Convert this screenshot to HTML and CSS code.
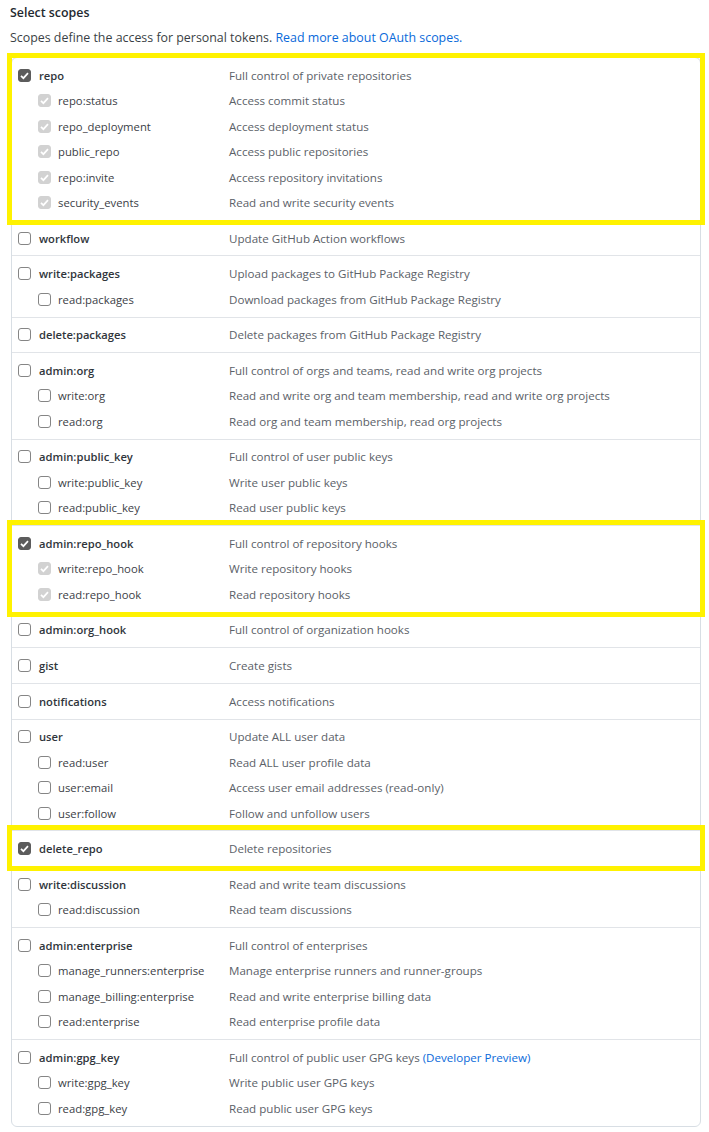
FILE: index.html
```html
<!DOCTYPE html>
<html lang="en">
<head>
<meta charset="utf-8">
<title>Select scopes</title>
<link rel="stylesheet" href="styles.css">
</head>
<body>
<h3 class="title">Select scopes</h3>
<p class="intro">Scopes define the access for personal tokens. <a class="link" href="#">Read more about OAuth scopes.</a></p>

<div class="scopes">
  <div class="group hl">
    <div class="row"><div class="name"><span class="cb on"><svg viewBox="0 0 13 13"><path d="M3 6.8 5.4 9.2 10 4.2"/></svg></span><b>repo</b></div><div class="desc">Full control of private repositories</div></div>
    <div class="row child"><div class="name"><span class="cb dis"><svg viewBox="0 0 13 13"><path d="M3 6.8 5.4 9.2 10 4.2"/></svg></span>repo:status</div><div class="desc">Access commit status</div></div>
    <div class="row child"><div class="name"><span class="cb dis"><svg viewBox="0 0 13 13"><path d="M3 6.8 5.4 9.2 10 4.2"/></svg></span>repo_deployment</div><div class="desc">Access deployment status</div></div>
    <div class="row child"><div class="name"><span class="cb dis"><svg viewBox="0 0 13 13"><path d="M3 6.8 5.4 9.2 10 4.2"/></svg></span>public_repo</div><div class="desc">Access public repositories</div></div>
    <div class="row child"><div class="name"><span class="cb dis"><svg viewBox="0 0 13 13"><path d="M3 6.8 5.4 9.2 10 4.2"/></svg></span>repo:invite</div><div class="desc">Access repository invitations</div></div>
    <div class="row child"><div class="name"><span class="cb dis"><svg viewBox="0 0 13 13"><path d="M3 6.8 5.4 9.2 10 4.2"/></svg></span>security_events</div><div class="desc">Read and write security events</div></div>
  </div>

  <div class="group">
    <div class="row"><div class="name"><span class="cb"></span><b>workflow</b></div><div class="desc">Update GitHub Action workflows</div></div>
  </div>

  <div class="group">
    <div class="row"><div class="name"><span class="cb"></span><b>write:packages</b></div><div class="desc">Upload packages to GitHub Package Registry</div></div>
    <div class="row child"><div class="name"><span class="cb"></span>read:packages</div><div class="desc">Download packages from GitHub Package Registry</div></div>
  </div>

  <div class="group">
    <div class="row"><div class="name"><span class="cb"></span><b>delete:packages</b></div><div class="desc">Delete packages from GitHub Package Registry</div></div>
  </div>

  <div class="group">
    <div class="row"><div class="name"><span class="cb"></span><b>admin:org</b></div><div class="desc">Full control of orgs and teams, read and write org projects</div></div>
    <div class="row child"><div class="name"><span class="cb"></span>write:org</div><div class="desc">Read and write org and team membership, read and write org projects</div></div>
    <div class="row child"><div class="name"><span class="cb"></span>read:org</div><div class="desc">Read org and team membership, read org projects</div></div>
  </div>

  <div class="group">
    <div class="row"><div class="name"><span class="cb"></span><b>admin:public_key</b></div><div class="desc">Full control of user public keys</div></div>
    <div class="row child"><div class="name"><span class="cb"></span>write:public_key</div><div class="desc">Write user public keys</div></div>
    <div class="row child"><div class="name"><span class="cb"></span>read:public_key</div><div class="desc">Read user public keys</div></div>
  </div>

  <div class="group hl">
    <div class="row"><div class="name"><span class="cb on"><svg viewBox="0 0 13 13"><path d="M3 6.8 5.4 9.2 10 4.2"/></svg></span><b>admin:repo_hook</b></div><div class="desc">Full control of repository hooks</div></div>
    <div class="row child"><div class="name"><span class="cb dis"><svg viewBox="0 0 13 13"><path d="M3 6.8 5.4 9.2 10 4.2"/></svg></span>write:repo_hook</div><div class="desc">Write repository hooks</div></div>
    <div class="row child"><div class="name"><span class="cb dis"><svg viewBox="0 0 13 13"><path d="M3 6.8 5.4 9.2 10 4.2"/></svg></span>read:repo_hook</div><div class="desc">Read repository hooks</div></div>
  </div>

  <div class="group">
    <div class="row"><div class="name"><span class="cb"></span><b>admin:org_hook</b></div><div class="desc">Full control of organization hooks</div></div>
  </div>

  <div class="group">
    <div class="row"><div class="name"><span class="cb"></span><b>gist</b></div><div class="desc">Create gists</div></div>
  </div>

  <div class="group">
    <div class="row"><div class="name"><span class="cb"></span><b>notifications</b></div><div class="desc">Access notifications</div></div>
  </div>

  <div class="group">
    <div class="row"><div class="name"><span class="cb"></span><b>user</b></div><div class="desc">Update ALL user data</div></div>
    <div class="row child"><div class="name"><span class="cb"></span>read:user</div><div class="desc">Read ALL user profile data</div></div>
    <div class="row child"><div class="name"><span class="cb"></span>user:email</div><div class="desc">Access user email addresses (read-only)</div></div>
    <div class="row child"><div class="name"><span class="cb"></span>user:follow</div><div class="desc">Follow and unfollow users</div></div>
  </div>

  <div class="group hl">
    <div class="row"><div class="name"><span class="cb on"><svg viewBox="0 0 13 13"><path d="M3 6.8 5.4 9.2 10 4.2"/></svg></span><b>delete_repo</b></div><div class="desc">Delete repositories</div></div>
  </div>

  <div class="group">
    <div class="row"><div class="name"><span class="cb"></span><b>write:discussion</b></div><div class="desc">Read and write team discussions</div></div>
    <div class="row child"><div class="name"><span class="cb"></span>read:discussion</div><div class="desc">Read team discussions</div></div>
  </div>

  <div class="group">
    <div class="row"><div class="name"><span class="cb"></span><b>admin:enterprise</b></div><div class="desc">Full control of enterprises</div></div>
    <div class="row child"><div class="name"><span class="cb"></span>manage_runners:enterprise</div><div class="desc">Manage enterprise runners and runner-groups</div></div>
    <div class="row child"><div class="name"><span class="cb"></span>manage_billing:enterprise</div><div class="desc">Read and write enterprise billing data</div></div>
    <div class="row child"><div class="name"><span class="cb"></span>read:enterprise</div><div class="desc">Read enterprise profile data</div></div>
  </div>

  <div class="group">
    <div class="row"><div class="name"><span class="cb"></span><b>admin:gpg_key</b></div><div class="desc">Full control of public user GPG keys <a class="link" href="#">(Developer Preview)</a></div></div>
    <div class="row child"><div class="name"><span class="cb"></span>write:gpg_key</div><div class="desc">Write public user GPG keys</div></div>
    <div class="row child"><div class="name"><span class="cb"></span>read:gpg_key</div><div class="desc">Read public user GPG keys</div></div>
  </div>
</div>
</body>
</html>
```

FILE: styles.css
```css
html, body {
  background: #ffffff;
}

body {
  margin: 0;
  padding: 0 8px 0 10px;
  font-family: "Open Sans", "Noto Sans", sans-serif;
  color: #24292f;
}

.title {
  margin: 3px 0 0;
  font-size: 12.4px;
  font-weight: 600;
  line-height: 20px;
}

.intro {
  margin: 5px 0 9px;
  font-size: 12.4px;
  line-height: 20px;
  color: #3a3f45;
}

.link {
  color: #0969da;
  text-decoration: none;
}

.scopes {
  margin-left: 1px;
  width: 688px;
  border: 1px solid #d8dee4;
  border-radius: 6px;
}

.group {
  padding: 4.6px 0;
  border-top: 1px solid #e1e4e8;
}

.group:first-child {
  border-top: 0;
}

.group.hl {
  position: relative;
  z-index: 1;
  outline: 5px solid #fff200;
  outline-offset: 0;
}

.row {
  display: flex;
  align-items: center;
  height: 25.45px;
  padding-left: 6px;
  font-size: 11.6px;
}

.name {
  display: flex;
  align-items: center;
  gap: 8px;
  width: 211px;
  flex: none;
  font-size: 11.3px;
  color: #3b4046;
}

.name b {
  font-weight: 600;
  font-size: 11.2px;
  color: #30353b;
}

.child .name {
  padding-left: 20px;
  width: 191px;
  gap: 7px;
}

.desc {
  color: #5b6168;
}

.cb {
  display: inline-flex;
  box-sizing: border-box;
  width: 13px;
  height: 13px;
  flex: none;
  border: 1px solid #858585;
  border-radius: 3px;
  background: #ffffff;
}

.cb svg {
  width: 13px;
  height: 13px;
  margin: -1px;
  fill: none;
  stroke: #ffffff;
  stroke-width: 1.7;
}

.cb.on {
  border-color: #5c5c5c;
  background: #5c5c5c;
}

.cb.dis {
  border-color: #d2d2d2;
  background: #d2d2d2;
}
```
